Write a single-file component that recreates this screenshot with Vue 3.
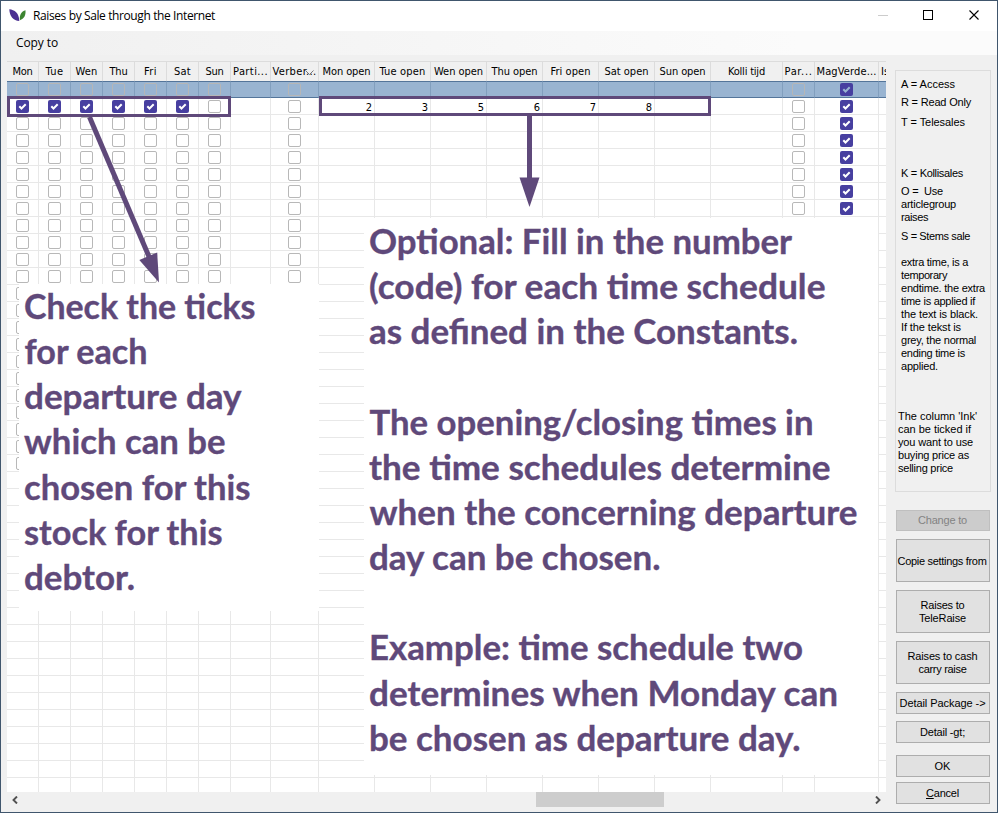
<script setup>
const columns = [
  { label: 'Mon', w: 32, t: 20, checks: 23 },
  { label: 'Tue', w: 32, t: 18, checks: 23 },
  { label: 'Wen', w: 32, t: 22, checks: 23 },
  { label: 'Thu', w: 32, t: 18, checks: 23 },
  { label: 'Fri', w: 32, t: 13, checks: 23 },
  { label: 'Sat', w: 32, t: 17, checks: 23 },
  { label: 'Sun', w: 32, t: 18, checks: 23 },
  { label: 'Parti...', w: 40, t: 35 },
  { label: 'Verber...', w: 48, t: 44, checks: 12, sorted: true },
  { label: 'Mon open', w: 56, t: 48, value: '2' },
  { label: 'Tue open', w: 56, t: 46, value: '3' },
  { label: 'Wen open', w: 56, t: 49, value: '5' },
  { label: 'Thu open', w: 56, t: 46, value: '6' },
  { label: 'Fri open', w: 56, t: 40, value: '7' },
  { label: 'Sat open', w: 56, t: 44, value: '8' },
  { label: 'Sun open', w: 56, t: 46 },
  { label: 'Kolli tijd', w: 72, t: 37 },
  { label: 'Par...', w: 32, t: 28, checks: 8 },
  { label: 'MagVerde...', w: 64, t: 60, checks: 8, allOn: true },
  { label: 'Is', w: 32, t: 8, start: true },
]
const isChecked = (col, c, r) => col.allOn || (r === 1 && c < 6)

const legend = [
  { top: 7, lines: [['A = Access', 54]] },
  { top: 5, lines: [['R = Read Only', 70]] },
  { top: 7, lines: [['T = Telesales', 64]] },
  { top: 38, lines: [['K = Kollisales', 62]] },
  { top: 5, lines: [['O =  Use', 42], ['articlegroup', 55], ['raises', 27]] },
  { top: 6, lines: [['S = Stems sale', 69]] },
  {
    top: 13,
    lines: [
      ['extra time, is a', 67], ['temporary', 46], ['endtime. the extra', 84],
      ['time is applied if', 74], ['the text is black.', 77], ['If the tekst is', 60],
      ['grey, the normal', 75], ['ending time is', 64], ['applied.', 37],
    ],
  },
  {
    top: 37,
    outdent: true,
    lines: [
      ["The column 'Ink'", 79], ['can be ticked if', 73], ['you want to use', 75],
      ['buying price as', 71], ['selling price', 55],
    ],
  },
]

const buttons = [
  { h: 21, gap: 0, disabled: true, lines: [['Change to', 49]] },
  { h: 43, gap: 8, lines: [['Copie settings from', 89]], low: true },
  { h: 43, gap: 8, lines: [['Raises to', 44], ['TeleRaise', 47]] },
  { h: 43, gap: 8, lines: [['Raises to cash', 70], ['carry raise', 48]] },
  { h: 22, gap: 8, lines: [['Detail Package ->', 86]] },
  { h: 22, gap: 7, lines: [['Detail -gt;', 45]], key: 8 },
  { h: 22, gap: 12, lines: [['OK', 16]] },
  { h: 22, gap: 5, lines: [['Cancel', 33]], key: 0 },
]

const leftNote = [
  ['Check the ticks', 24, 318.5, 231.5], ['for each', 24.5, 363.5, 123],
  ['departure day', 24, 409, 217.5], ['which can be', 24, 454, 201.5],
  ['chosen for this', 24, 499.5, 226.5], ['stock for this', 24, 544.5, 198.5],
  ['debtor.', 24, 589.5, 111],
]
const rightNote = [
  ['Optional: Fill in the number', 369, 253.5, 423],
  ['(code) for each time schedule', 369, 298.5, 456.5],
  ['as defined in the Constants.', 369, 344.3, 429],
  ['The opening/closing times in', 369.5, 434.5, 444],
  ['the time schedules determine', 369, 479.5, 461.5],
  ['when the concerning departure', 369.5, 524.5, 488],
  ['day can be chosen.', 369, 569.5, 291.5],
  ['Example: time schedule two', 369, 660.3, 434],
  ['determines when Monday can', 369, 705.5, 469],
  ['be chosen as departure day.', 369, 750.5, 431.5],
]

// Spreads the difference to the wanted width over the letters.
const vFit = {
  mounted(el, { value }) {
    const n = el.textContent.length
    el.style.letterSpacing = (value - el.getBoundingClientRect().width) / n + 'px'
  },
}
</script>

<template>
  <div class="window">
    <header class="titlebar">
      <svg class="logo" width="18" height="13" viewBox="0 0 18 13">
        <path d="M0.3 0.3C5.5 0.8 10 4 10.3 12C4.3 11.6 0.6 7.5 0.3 0.3Z" fill="#4b2f92" />
        <path d="M16.5 1.3C16.9 6.5 15 10 10.9 11.2C10.3 6 12.3 2.5 16.5 1.3Z" fill="#3c8430" />
      </svg>
      <span v-fit="182" class="title">Raises by Sale through the Internet</span>
      <svg class="controls" width="102" height="10" viewBox="0 0 102 10" shape-rendering="crispEdges">
        <rect x="0" y="5" width="10" height="1" fill="#ccc" />
        <rect x="45.5" y="0.5" width="9" height="9" fill="none" stroke="#000" />
        <path d="M91.5 0.5L100.5 9.5M100.5 0.5L91.5 9.5" stroke="#000" stroke-width="1.1" shape-rendering="auto" />
      </svg>
    </header>
    <nav class="menubar"><span v-fit="42">Copy to</span></nav>

    <div class="body">
      <main class="gridpane">
        <div class="grid">
          <div v-for="(col, c) in columns" :key="c" class="col" :style="{ width: col.w + 'px' }">
            <div class="head" :class="{ start: col.start }">
              <span v-fit="col.t">{{ col.label }}</span>
              <svg v-if="col.sorted" class="sort" width="9" height="5" viewBox="0 0 9 5">
                <path d="M0.5 0.5L4.5 4.5L8.5 0.5" fill="none" stroke="#777" />
              </svg>
            </div>
            <div v-for="r in 42" :key="r" class="cell" :class="{ selected: r === 1, value: r === 2 && col.value }">
              <span
                v-if="col.checks && r <= col.checks"
                class="box"
                :class="{ on: isChecked(col, c, r - 1) }"
              >
                <svg v-if="isChecked(col, c, r - 1)" width="13" height="13" viewBox="0 0 13 13">
                  <path d="M3.3 6.2L5.5 8.5L9.7 4.3" fill="none" :stroke="r === 1 ? '#99b4d1' : '#fff'" stroke-width="2" />
                </svg>
              </span>
              <template v-if="r === 2">{{ col.value }}</template>
            </div>
          </div>
        </div>
        <div class="scrollbar">
          <svg width="6" height="8" viewBox="0 0 6 8"><path d="M5 0.5L1.5 4L5 7.5" fill="none" stroke="#505050" stroke-width="1.9" /></svg>
          <div class="track"><div class="thumb"></div></div>
          <svg width="6" height="8" viewBox="0 0 6 8"><path d="M1 0.5L4.5 4L1 7.5" fill="none" stroke="#505050" stroke-width="1.9" /></svg>
        </div>
      </main>

      <aside class="side">
        <section class="legend">
          <div v-for="(g, i) in legend" :key="i" class="group" :class="{ outdent: g.outdent }" :style="{ marginTop: g.top + 'px' }">
            <div v-for="l in g.lines" :key="l[0]" class="line"><span v-fit="l[1]">{{ l[0] }}</span></div>
          </div>
        </section>
        <div class="buttons">
          <button
            v-for="(b, i) in buttons"
            :key="i"
            :disabled="b.disabled"
            :class="{ low: b.low }"
            :style="{ height: b.h + 'px', marginTop: b.gap + 'px' }"
          >
            <span v-for="l in b.lines" :key="l[0]" class="line">
              <span v-if="b.key === undefined" v-fit="l[1]">{{ l[0] }}</span>
              <span v-else v-fit="l[1]">{{ l[0].slice(0, b.key) }}<u>{{ l[0][b.key] }}</u>{{ l[0].slice(b.key + 1) }}</span>
            </span>
          </button>
        </div>
      </aside>
    </div>

    <svg class="notes" width="998" height="813" viewBox="0 0 998 813">
      <rect x="19" y="284" width="300" height="327" fill="#fff" />
      <rect x="364" y="218" width="514" height="557" fill="#fff" />
      <g fill="none" stroke="#5f497a" stroke-width="3">
        <rect x="8.5" y="97.5" width="221" height="18" />
        <rect x="320.5" y="97.5" width="389" height="17" />
      </g>
      <g stroke="#5f497a" stroke-width="5">
        <path d="M89.5 117L150 259" />
        <path d="M529.5 116V180" />
      </g>
      <path d="M139.3 260L157.2 252.5L159 282.5Z" fill="#5f497a" />
      <path d="M519.5 177.5H539.5L529.5 207Z" fill="#5f497a" />
      <text
        v-for="t in [...leftNote, ...rightNote]"
        :key="t[0]"
        :x="t[1]"
        :y="t[2]"
        :textLength="t[3]"
        lengthAdjust="spacingAndGlyphs"
      >{{ t[0] }}</text>
    </svg>
  </div>
</template>

<style>
body { margin: 0; }
</style>

<style scoped>
.window {
  position: relative;
  box-sizing: border-box;
  width: 998px;
  height: 813px;
  border: 1px solid #40566d;
  background: #f0f0f0;
  color: #000;
  font: 11px/13px "Liberation Sans", sans-serif;
  white-space: pre;
  overflow: hidden;
}
.titlebar {
  display: flex;
  align-items: center;
  height: 30px;
  padding: 0 17px 0 8px;
  background: #fff;
}
.logo { margin-top: -2px; }
.title { margin-left: 6px; font: 12px/16px "Open Sans", sans-serif; }
.controls { margin-left: auto; margin-top: -2px; }
.menubar {
  display: flex;
  align-items: center;
  height: 24px;
  padding-left: 15px;
  background: linear-gradient(90deg, #f0f0f0, #fbfbfb 80%);
  font: 12px/16px "Open Sans", sans-serif;
}
.body { display: flex; padding: 6px 7px 0 6px; }
.gridpane { width: 879px; flex: none; }
.grid { display: flex; height: 731px; overflow: hidden; background: #fff; }
.col { flex: none; }
.head {
  position: relative;
  display: flex;
  justify-content: center;
  align-items: center;
  box-sizing: border-box;
  height: 20px;
  border-top: 1px solid #dcdcdc;
  border-right: 1px solid #dcdcdc;
  background: #f0f0f0;
  font: 11px/13px "DejaVu Sans Condensed", "DejaVu Sans", sans-serif;
}
.head.start { justify-content: flex-start; padding-left: 2px; }
.sort { position: absolute; left: 34px; top: 8px; }
.cell {
  display: flex;
  justify-content: center;
  align-items: center;
  box-sizing: border-box;
  height: 17px;
  border-right: 1px solid #e8e8e8;
  border-bottom: 1px solid #e8e8e8;
}
.cell.selected {
  background: #99b4d1;
  border-top: 1px solid #54759a;
  border-bottom-color: #54759a;
  border-right-color: #829fbe;
}
.cell.value {
  justify-content: flex-end;
  padding: 2px 2px 0 0;
  font: 11px/13px "DejaVu Sans Condensed", "DejaVu Sans", sans-serif;
}
.box {
  box-sizing: border-box;
  width: 13px;
  height: 13px;
  flex: none;
  border: 1px solid #b8b8b8;
  border-radius: 2px;
}
.selected .box { border-color: #b6b6b6; }
.box.on { border: 0; background: #473fa0; }
.box svg { display: block; }
.scrollbar { display: flex; align-items: center; height: 15px; padding: 0 5px; }
.track { flex: 1; height: 15px; }
.thumb { width: 128px; height: 15px; margin-left: 518px; background: #cdcdcd; }
.side { width: 96px; padding: 9px 0 0 9px; flex: none; }
.legend {
  box-sizing: border-box;
  width: 96px;
  height: 422px;
  border: 1px solid #dcdcdc;
  overflow: hidden;
}
.group { padding-left: 5px; }
.group.outdent { padding-left: 2px; }
.line { display: block; height: 13px; line-height: 13px; }
.buttons { display: flex; flex-direction: column; width: 94px; margin: 18px 0 0 1px; }
button {
  display: flex;
  flex-direction: column;
  justify-content: center;
  align-items: center;
  box-sizing: border-box;
  padding: 0 1px 0 0;
  border: 1px solid #adadad;
  background: #e1e1e1;
  color: #000;
  font: inherit;
  white-space: pre;
}
button.low { padding: 2px 2px 0 0; }
button:disabled { border-color: #bfbfbf; background: #ccc; color: #838383; }
.notes { position: absolute; left: -1px; top: -1px; pointer-events: none; }
.notes text {
  font: 700 34px Lato, sans-serif;
  fill: #5f497a;
  stroke: #5f497a;
  stroke-width: 0.35px;
}
</style>
